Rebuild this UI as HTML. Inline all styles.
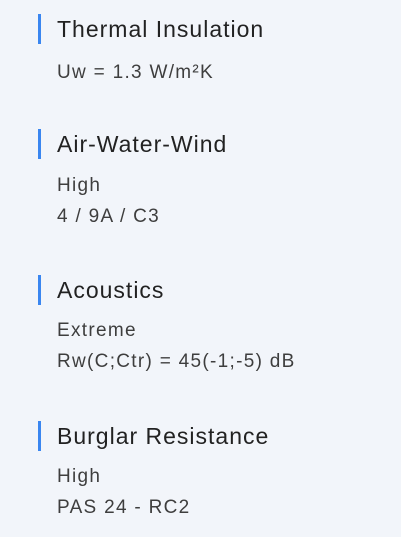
<html><head><style>
body{margin:0;background:#f2f5fa;font-family:"Liberation Sans",sans-serif;width:401px;height:537px;overflow:hidden;position:relative}
.t{position:absolute;left:57px;font-size:23px;letter-spacing:1px;color:#222;line-height:30px;white-space:nowrap}
.t:before{content:"";position:absolute;left:-19px;top:0;width:3px;height:30px;background:#3a86f0}
.s{position:absolute;left:57px;font-size:19px;letter-spacing:1.3px;color:#3e3e3e;line-height:31px;white-space:nowrap}
</style></head><body>
<div class="t" style="top:14px">Thermal Insulation</div>
<div class="s" style="top:57px">Uw = 1.3 W/m²K</div>
<div class="t" style="top:129px">Air-Water-Wind</div>
<div class="s" style="top:170px">High<br>4 / 9A / C3</div>
<div class="t" style="top:275px">Acoustics</div>
<div class="s" style="top:315px">Extreme<br>Rw(C;Ctr) = 45(-1;-5) dB</div>
<div class="t" style="top:421px">Burglar Resistance</div>
<div class="s" style="top:461px">High<br>PAS 24 - RC2</div>
</body></html>
